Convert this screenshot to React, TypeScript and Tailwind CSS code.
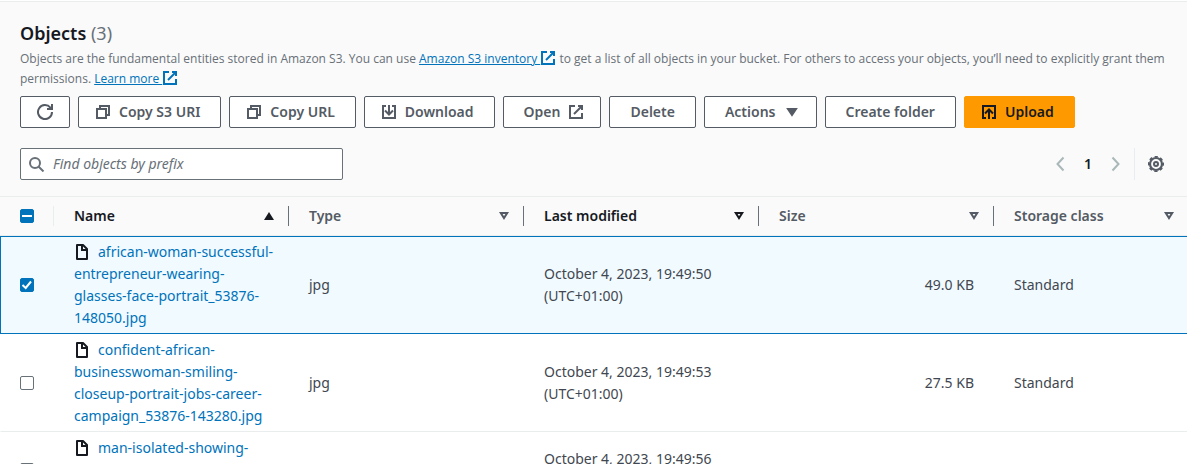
import { useEffect, useRef, useState } from 'react';
import type { ReactNode } from 'react';

type IconProps = { className?: string; children: ReactNode };

function Icon({ className = '', children }: IconProps) {
  return (
    <svg
      viewBox="0 0 16 16"
      width="16"
      height="16"
      fill="none"
      stroke="currentColor"
      strokeWidth="2"
      aria-hidden="true"
      className={`shrink-0 ${className}`}
    >
      {children}
    </svg>
  );
}

const RefreshIcon = () => (
  <Icon>
    <path d="M10 5h5V0" />
    <path d="M15 8a7 7 0 1 1-1.6-4.4L14.6 5" />
  </Icon>
);
const CopyIcon = () => (
  <Icon>
    <path d="M2 5h9v9H2z" />
    <path d="M5 5V2h9v9h-3" />
  </Icon>
);
const DownloadIcon = () => (
  <Icon>
    <path d="M5 2H2v12h12V2h-3" />
    <path d="M8 1v9" />
    <path d="M4 6.5l4 4 4-4" />
  </Icon>
);
const UploadIcon = () => (
  <Icon>
    <path d="M5 14H2V2h12v12h-3" />
    <path d="M8 15V6" />
    <path d="M4 9.5l4-4 4 4" />
  </Icon>
);
const ExternalIcon = ({ className }: { className?: string }) => (
  <Icon className={className}>
    <path d="M10 2h4v4" />
    <path d="M6 10l8-8" />
    <path d="M14 9v5H2V2h5" />
  </Icon>
);
const FileIcon = () => (
  <Icon className="mr-2 inline-block align-[-3px] text-[#16191f]">
    <path d="M3 1h6l4 4v10H3z" strokeLinejoin="round" />
    <path d="M8 1v5h5" />
  </Icon>
);
const CaretIcon = () => (
  <Icon>
    <path d="M4 5h8l-4 6z" fill="currentColor" />
  </Icon>
);
const GearIcon = () => (
  <Icon>
    <circle cx="8" cy="8" r="6" strokeWidth="2.2" />
    <circle cx="8" cy="8" r="7.3" strokeWidth="1.6" strokeDasharray="3.2 2.533" strokeDashoffset="1.6" />
    <circle cx="8" cy="8" r="2" strokeWidth="2" />
  </Icon>
);

type ButtonProps = { children: ReactNode; label?: string; primary?: boolean; pad?: string };

function Button({ children, label, primary = false, pad = 'px-5' }: ButtonProps) {
  const tone = primary
    ? 'border-[#ff9900] bg-[#ff9900] text-[#16191f] hover:bg-[#ec7211]'
    : 'border-[#545b64] bg-white text-[#545b64] hover:bg-[#fafafa]';
  return (
    <button
      type="button"
      aria-label={label}
      className={`flex h-8 items-center gap-2 rounded-xs border text-sm font-semibold whitespace-nowrap ${pad} ${tone}`}
    >
      {children}
    </button>
  );
}

type CheckboxProps = { label: string; checked: boolean; mixed?: boolean; onChange: () => void };

function Checkbox({ label, checked, mixed = false, onChange }: CheckboxProps) {
  const ref = useRef<HTMLInputElement>(null);
  useEffect(() => {
    if (ref.current) ref.current.indeterminate = mixed;
  }, [mixed]);
  const on = checked || mixed;
  return (
    <label className="grid size-3.5">
      <input
        ref={ref}
        type="checkbox"
        aria-label={label}
        checked={checked}
        onChange={onChange}
        className={`col-start-1 row-start-1 size-3.5 appearance-none rounded-xs border ${
          on ? 'border-[#0073bb] bg-[#0073bb]' : 'border-[#687078] bg-white'
        }`}
      />
      {on && (
        <svg
          viewBox="0 0 14 14"
          width="14"
          height="14"
          fill="none"
          stroke="white"
          strokeWidth="2"
          aria-hidden="true"
          className="pointer-events-none col-start-1 row-start-1"
        >
          <path d={mixed ? 'M2 7h10' : 'M2.5 7l3.2 3L11 3.5'} />
        </svg>
      )}
    </label>
  );
}

const columns = [
  { title: 'Name', sort: 'asc', dark: true },
  { title: 'Type', sort: 'none', dark: false },
  { title: 'Last modified', sort: 'none', dark: true },
  { title: 'Size', sort: 'none', dark: false },
  { title: 'Storage class', sort: 'none', dark: false },
];

const files = [
  {
    name: ['african-woman-successful-', 'entrepreneur-wearing-', 'glasses-face-portrait_53876-', '148050.jpg'],
    type: 'jpg',
    modified: 'October 4, 2023, 19:49:50',
    size: '49.0 KB',
    storage: 'Standard',
  },
  {
    name: ['confident-african-', 'businesswoman-smiling-', 'closeup-portrait-jobs-career-', 'campaign_53876-143280.jpg'],
    type: 'jpg',
    modified: 'October 4, 2023, 19:49:53',
    size: '27.5 KB',
    storage: 'Standard',
  },
  {
    name: ['man-isolated-showing-'],
    type: '',
    modified: 'October 4, 2023, 19:49:56',
    size: '',
    storage: '',
  },
];

const linkClass = 'text-[#0073bb] hover:text-[#0a4a74]';

export default function App() {
  const [selected, setSelected] = useState([true, false, false]);
  const all = selected.every(Boolean);
  const some = selected.some(Boolean);
  const toggle = (i: number) => setSelected(selected.map((v, j) => (j === i ? !v : v)));

  return (
    <main className="h-screen overflow-hidden bg-white pt-px font-['Noto_Sans','Open_Sans',sans-serif] text-sm leading-[22px] text-[#16191f]">
      <header className="border-y border-[#eaeded] bg-[#fafafa] px-5 pt-[19px] pb-4">
        <h1 className="text-lg leading-6 font-semibold">
          Objects <span className="font-normal text-[#687078]">(3)</span>
        </h1>
        <p className="mt-1 font-['Open_Sans','Noto_Sans',sans-serif] text-xs leading-5 text-[#687078]">
          Objects are the fundamental entities stored in Amazon S3. You can use{' '}
          <a href="#inventory" className={linkClass}>
            <span className="underline">Amazon S3 inventory </span>
            <ExternalIcon className="inline-block align-[-3px]" />
          </a>{' '}
          to get a list of all objects in your bucket. For others to access your objects, you’ll need to explicitly
          grant them permissions.{' '}
          <a href="#learn" className={linkClass}>
            <span className="underline">Learn more </span>
            <ExternalIcon className="inline-block align-[-3px]" />
          </a>
        </p>
        <div className="mt-[7px] flex flex-wrap gap-2">
          <Button label="Refresh" pad="px-4">
            <RefreshIcon />
          </Button>
          <Button pad="pr-5 pl-4">
            <CopyIcon />
            Copy S3 URI
          </Button>
          <Button pad="pr-5 pl-4">
            <CopyIcon />
            Copy URL
          </Button>
          <Button pad="pr-5 pl-4">
            <DownloadIcon />
            Download
          </Button>
          <Button pad="pr-4 pl-5">
            Open
            <ExternalIcon />
          </Button>
          <Button>Delete</Button>
          <Button pad="pr-4 pl-5">
            Actions
            <CaretIcon />
          </Button>
          <Button>Create folder</Button>
          <Button primary pad="pr-5 pl-4">
            <UploadIcon />
            Upload
          </Button>
        </div>
        <div className="mt-5 flex items-center justify-between">
          <label className="flex h-8 w-[323px] items-center gap-2 rounded-xs border border-[#687078] bg-white px-2 text-[#687078]">
            <Icon>
              <circle cx="6" cy="7" r="5" />
              <path d="M9.5 10.5l5 5" />
            </Icon>
            <input
              type="text"
              aria-label="Find objects"
              placeholder="Find objects by prefix"
              className="min-w-0 flex-1 bg-transparent italic outline-none placeholder:text-[#687078]"
            />
          </label>
          <div className="flex h-8 items-center">
            <button type="button" aria-label="Previous page" className="text-[#aab7b8]">
              <Icon>
                <path d="M11.5 1.5L5.5 8l6 6.5" />
              </Icon>
            </button>
            <button type="button" aria-current="page" className="w-10 text-center font-semibold">
              1
            </button>
            <button type="button" aria-label="Next page" className="text-[#aab7b8]">
              <Icon>
                <path d="M4.5 1.5l6 6.5-6 6.5" />
              </Icon>
            </button>
            <span className="ml-2.5 h-8 border-l border-[#eaeded]" />
            <button type="button" aria-label="Preferences" className="mr-[3px] ml-[13px] text-[#545b64]">
              <GearIcon />
            </button>
          </div>
        </div>
      </header>

      <table className="w-full table-fixed border-separate border-spacing-0">
        <colgroup>
          <col className="w-[54px]" />
          <col className="w-[235px]" />
          <col className="w-[235px]" />
          <col className="w-[235px]" />
          <col className="w-[235px]" />
          <col />
        </colgroup>
        <thead className="bg-[#fafafa]">
          <tr>
            <th className="h-[39px] border-b border-[#eaeded] p-0">
              <div className="flex h-5 items-center border-r border-[#eaeded] pl-5">
                <Checkbox
                  label="Select all objects"
                  checked={all}
                  mixed={some && !all}
                  onChange={() => setSelected(selected.map(() => !all))}
                />
              </div>
            </th>
            {columns.map((c) => (
              <th key={c.title} className="group border-b border-[#eaeded] p-0 font-semibold">
                <div
                  className={`flex h-5 items-center justify-between border-r border-[#687078] pr-[11px] pl-5 group-last:border-transparent group-last:pr-[9px] ${
                    c.dark ? 'text-[#16191f]' : 'text-[#545b64]'
                  }`}
                >
                  {c.title}
                  <Icon>
                    {c.sort === 'asc' ? (
                      <path d="M3 12h10L8 4z" fill="currentColor" stroke="none" />
                    ) : (
                      <path d="M4.8 5h6.4L8 10.1z" />
                    )}
                  </Icon>
                </div>
              </th>
            ))}
          </tr>
        </thead>
        <tbody>
          {files.map((f, i) => (
            <tr
              key={f.modified}
              className={
                selected[i]
                  ? 'bg-[#f1faff] *:border-y *:border-[#0073bb] *:first:border-l'
                  : '*:border-y *:border-t-transparent *:border-b-[#eaeded] *:first:border-l *:first:border-l-transparent'
              }
            >
              <td className="h-[76px] py-1 pl-[19px]">
                <Checkbox label={`Select ${f.name.join('')}`} checked={selected[i]} onChange={() => toggle(i)} />
              </td>
              <td className="py-1 pl-5 align-top whitespace-nowrap">
                <a href="#object" className={linkClass}>
                  <FileIcon />
                  {f.name.map((line, n) => (
                    <span key={line}>
                      {n > 0 && <br />}
                      {line}
                    </span>
                  ))}
                </a>
              </td>
              <td className="px-5 text-[#414750]">{f.type}</td>
              <td className="px-5 text-[#414750]">
                {f.modified}
                <br />
                (UTC+01:00)
              </td>
              <td className="px-5 text-right text-[#414750]">{f.size}</td>
              <td className="px-5 text-[#414750]">{f.storage}</td>
            </tr>
          ))}
        </tbody>
      </table>
    </main>
  );
}
